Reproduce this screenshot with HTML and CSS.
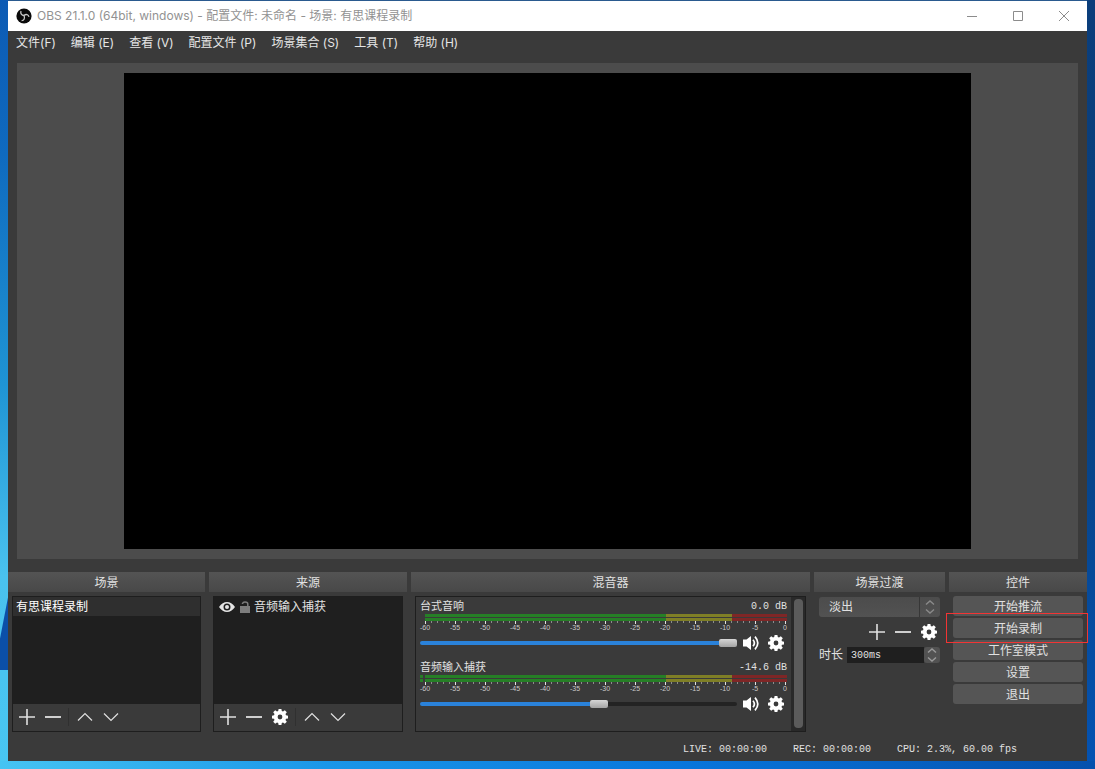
FILE: index.html
```html
<!DOCTYPE html>
<html lang="zh-CN">
<head>
<meta charset="utf-8">
<title>OBS 21.1.0</title>
<link rel="stylesheet" href="styles.css">
</head>
<body>
<svg class="defs" aria-hidden="true">
  <symbol id="plus" viewBox="0 0 16 16"><path d="M8 0v16M0 8h16" fill="none" stroke="currentColor" stroke-width="1.6"/></symbol>
  <symbol id="minus" viewBox="0 0 16 16"><path d="M0 8h16" fill="none" stroke="currentColor" stroke-width="1.8"/></symbol>
  <symbol id="up" viewBox="0 0 16 16"><path d="M1 11.5 8 4.5l7 7" fill="none" stroke="currentColor" stroke-width="1.2"/></symbol>
  <symbol id="down" viewBox="0 0 16 16"><path d="M1 4.5l7 7 7-7" fill="none" stroke="currentColor" stroke-width="1.2"/></symbol>
  <symbol id="gear" viewBox="0 0 16 16"><path fill="currentColor" fill-rule="evenodd" d="M6.6 0h2.8l.4 2.1 1.2.5L12.8 1.3l2 2-1.3 1.8.5 1.2 2 .4v2.7l-2 .4-.5 1.2 1.3 1.8-2 2-1.8-1.3-1.2.5-.4 2H6.6l-.4-2-1.2-.5-1.8 1.3-2-2L2.500 11 2 9.800 0 9.400V6.700l2-.4.5-1.200L1.200 3.300l2-2L5 2.600l1.200-.5zM8 5.600a2.400 2.400 0 1 0 0 4.800 2.400 2.400 0 0 0 0-4.800z"/></symbol>
  <symbol id="speaker" viewBox="0 0 16 16"><path fill="currentColor" d="M0 4.500h3.500L8 1v14l-4.500-3.500H0z"/><path d="M10 4.800q2.800 3.200 0 6.400M12 1.600q5.600 6.400 0 12.800" fill="none" stroke="currentColor" stroke-width="1.700"/></symbol>
  <symbol id="spin" viewBox="0 0 16 16"><path d="M4 5.500 8 2l4 3.500M4 10.500 8 14l4-3.500" fill="none" stroke="currentColor" stroke-width="1.400"/></symbol>
  <pattern id="minor" x="5" width="6" height="2" patternUnits="userSpaceOnUse"><path fill="#8c8c8c" d="M0 0h1v2H0z"/></pattern>
  <pattern id="major" x="5" width="30" height="3" patternUnits="userSpaceOnUse"><path fill="#e0e0e0" d="M0 0h1v3H0z"/></pattern>
  <symbol id="scale" viewBox="0 0 367 10">
    <path fill="#267f26" d="M5 0h241v3H5zM5 4h241v3H5z"/>
    <path fill="#7f7f26" d="M246 0h66v3h-66zM246 4h66v3h-66z"/>
    <path fill="#7f2626" d="M312 0h55v3h-55zM312 4h55v3h-55z"/>
    <g transform="translate(0 7)"><rect x="5" width="361" height="2" fill="url(#minor)"/><rect x="5" width="361" height="3" fill="url(#major)"/></g>
  </symbol>
</svg>
<div class="window">
  <header class="titlebar">
    <svg class="logo" viewBox="0 0 16 16" aria-hidden="true"><circle cx="8" cy="8" r="7.600" fill="#0a0a0a"/><g fill="none" stroke="#c8c8c8" stroke-width="1.300"><path d="M5 3c-.8 2.600.6 4.300 3 4.500"/><path d="M13 8.800c-.6-2.400-3-3-5-1.300"/><path d="M5.600 12.600c2.600 0 3.600-2.600 2.400-5.100"/></g></svg>
    <h1>OBS 21.1.0 (64bit, windows) - 配置文件: 未命名 - 场景: 有思课程录制</h1>
    <div class="caption">
      <button aria-label="最小化"><svg viewBox="0 0 10 10"><path d="M0 5.500h10"/></svg></button>
      <button aria-label="最大化"><svg viewBox="0 0 10 10"><path d="M.5.500h9v9h-9z"/></svg></button>
      <button aria-label="关闭"><svg viewBox="0 0 10 10"><path d="M0 0l10 10M10 0 0 10"/></svg></button>
    </div>
  </header>
  <nav class="menu">
    <a href="#">文件(F)</a><a href="#">编辑 (E)</a><a href="#">查看 (V)</a><a href="#">配置文件 (P)</a><a href="#">场景集合 (S)</a><a href="#">工具 (T)</a><a href="#">帮助 (H)</a>
  </nav>
  <main class="preview"><div class="canvas"></div></main>
  <div class="docks">
    <section class="dock">
      <h2>场景</h2>
      <div class="panel inset">
        <ul class="list"><li class="selected">有思课程录制</li></ul>
        <div class="tools">
          <button aria-label="添加场景"><svg><use href="#plus"/></svg></button>
          <button aria-label="删除场景"><svg><use href="#minus"/></svg></button>
          <span class="sep"></span>
          <button aria-label="上移"><svg><use href="#up"/></svg></button>
          <button aria-label="下移"><svg><use href="#down"/></svg></button>
        </div>
      </div>
    </section>
    <section class="dock">
      <h2>来源</h2>
      <div class="panel inset">
        <ul class="list"><li class="source">
          <svg class="eye" viewBox="0 0 16 12"><path fill="#e4e4e4" fill-rule="evenodd" d="M0 6q3.500-5 8-5t8 5q-3.500 5-8 5T0 6zm8-3.500a3.500 3.500 0 1 0 0 7 3.500 3.500 0 0 0 0-7z"/><circle cx="8" cy="6" r="2" fill="#e4e4e4"/></svg>
          <svg class="lock" viewBox="0 0 11 12"><path fill="#7d7d7d" d="M1 5h10v7H1z"/><path d="M3.500 3V2.500Q4 1 6 1q2.800 0 2.800 2v2" fill="none" stroke="#7d7d7d" stroke-width="1.500"/></svg>
          <span>音频输入捕获</span></li></ul>
        <div class="tools">
          <button aria-label="添加来源"><svg><use href="#plus"/></svg></button>
          <button aria-label="删除来源"><svg><use href="#minus"/></svg></button>
          <button class="bright" aria-label="来源设置"><svg><use href="#gear"/></svg></button>
          <span class="sep"></span>
          <button aria-label="上移"><svg><use href="#up"/></svg></button>
          <button aria-label="下移"><svg><use href="#down"/></svg></button>
        </div>
      </div>
    </section>
    <section class="dock">
      <h2>混音器</h2>
      <div class="mixer inset">
        <div class="channels">
          <div class="channel">
            <div class="name"><label for="desk">台式音响</label><output>0.0 dB</output></div>
            <svg class="meter" viewBox="0 0 367 10"><use href="#scale"/></svg>
            <div class="marks"><span>-60</span><span>-55</span><span>-50</span><span>-45</span><span>-40</span><span>-35</span><span>-30</span><span>-25</span><span>-20</span><span>-15</span><span>-10</span><span>-5</span><span>0</span></div>
            <div class="volume">
              <input id="desk" type="range" min="0" max="100" value="100" style="--level:100%">
              <button aria-label="静音"><svg><use href="#speaker"/></svg></button>
              <button aria-label="音频设置"><svg><use href="#gear"/></svg></button>
            </div>
          </div>
          <div class="channel">
            <div class="name"><label for="mic">音频输入捕获</label><output>-14.6 dB</output></div>
            <svg class="meter" viewBox="0 0 367 10"><path fill="#267f26" d="M0 0h3v3H0zM0 4h3v3H0z"/><use href="#scale"/></svg>
            <div class="marks"><span>-60</span><span>-55</span><span>-50</span><span>-45</span><span>-40</span><span>-35</span><span>-30</span><span>-25</span><span>-20</span><span>-15</span><span>-10</span><span>-5</span><span>0</span></div>
            <div class="volume">
              <input id="mic" type="range" min="0" max="100" value="57" style="--level:57%">
              <button aria-label="静音"><svg><use href="#speaker"/></svg></button>
              <button aria-label="音频设置"><svg><use href="#gear"/></svg></button>
            </div>
          </div>
        </div>
        <div class="scroll"><div class="handle"></div></div>
      </div>
    </section>
    <section class="dock">
      <h2>场景过渡</h2>
      <div class="transition">
        <div class="combo">
          <select aria-label="场景过渡"><option>淡出</option></select>
          <svg><use href="#spin"/></svg>
        </div>
        <div class="actions">
          <button aria-label="添加过渡"><svg><use href="#plus"/></svg></button>
          <button aria-label="删除过渡"><svg><use href="#minus"/></svg></button>
          <button class="bright" aria-label="过渡设置"><svg><use href="#gear"/></svg></button>
        </div>
        <div class="duration">
          <label for="duration">时长</label>
          <input id="duration" type="text" value="300ms">
          <button aria-label="调整时长"><svg><use href="#spin"/></svg></button>
        </div>
      </div>
    </section>
    <section class="dock">
      <h2>控件</h2>
      <div class="controls">
        <button>开始推流</button>
        <div class="marked"><button>开始录制</button></div>
        <button>工作室模式</button>
        <button>设置</button>
        <button>退出</button>
      </div>
    </section>
  </div>
  <footer class="status"><span>LIVE: 00:00:00</span><span>REC: 00:00:00</span><span>CPU: 2.3%, 60.00 fps</span></footer>
</div>
</body>
</html>
```
FILE: styles.css
```css
* { box-sizing: border-box; }

body {
  display: flex;
  min-height: 100vh;
  margin: 0;
  padding: 1px 8px 8px;
  font: 12px/20px "Liberation Sans", "Noto Sans CJK SC", sans-serif;
  color: #e1e1e1;
  background:
    linear-gradient(90deg, #45c4f3, #1a96e8 30%, #0876dc 62%, #0450ad) bottom / 100% 8px no-repeat,
    linear-gradient(101deg, transparent 8px, #0b4fa8 9px) 0 594px / 8px 76px no-repeat,
    linear-gradient(#0c5ab4, #0f6abf 20%, #1f94d4 50%, #4ac2ee 75%, #48c6f2) left / 8px 100% no-repeat,
    linear-gradient(#0b3e7b, #08407f 50%, #0453b3) right / 8px 100% no-repeat,
    #2a5a8f;
}

.defs { position: absolute; width: 0; height: 0; }

h1, h2, ul { margin: 0; padding: 0; font: inherit; list-style: none; }

button {
  display: flex;
  align-items: center;
  justify-content: center;
  padding: 0;
  border: 0;
  background: none;
  font: inherit;
  color: inherit;
}

button svg { width: 16px; height: 16px; }

.window {
  flex: 1;
  display: flex;
  flex-direction: column;
  min-width: 0;
  background: #3a3a3a;
}

.titlebar {
  display: flex;
  align-items: center;
  height: 30px;
  padding-left: 8px;
  background: #fff;
  color: #929292;
  font-family: Inter, "Noto Sans CJK SC", sans-serif;
}
.logo { width: 16px; height: 16px; margin-right: 5px; }
.caption { display: flex; margin-left: auto; }
.caption button { width: 46px; height: 30px; }
.caption svg { width: 10px; height: 10px; fill: none; stroke: #8c8c8c; }

.menu {
  display: flex;
  gap: 15px;
  padding: 2px 8px 10px;
  font-family: Inter, "Noto Sans CJK SC", sans-serif;
}
.menu a { color: #e6e6e6; text-decoration: none; white-space: nowrap; }

.preview {
  flex: 1;
  display: flex;
  justify-content: center;
  min-height: 120px;
  margin: 0 9px;
  padding: 10px;
  background: #4c4c4c;
}
.canvas { aspect-ratio: 16 / 9; background: #000; }

.docks {
  display: grid;
  grid-template-columns: 197fr 198fr 399fr 131fr 138fr;
  gap: 4px;
  margin-top: 13px;
}
.dock { min-width: 0; }
.dock h2 {
  height: 20px;
  background: linear-gradient(#545454, #484848);
  line-height: 22px;
  text-align: center;
}

.inset {
  height: 136px;
  margin: 4px 4px 0;
  border: 1px solid #1e1e1e;
}

.panel { display: flex; flex-direction: column; }
.list { flex: 1; background: #1f1f1f; }
.list li { height: 19px; padding: 0 3px; line-height: 21px; }
.selected { background: #2f2f2f; color: #fff; }
.list .source { display: flex; padding-left: 5px; }
.source svg { height: 12px; margin: 4px 4px 0 0; }
.eye { width: 16px; }
.lock { width: 11px; }

.tools { display: flex; height: 27px; padding-left: 1px; }
.tools button, .actions button { width: 26px; height: 26px; }
.tools svg, .actions svg { color: #e0e0e0; }
.tools .bright svg, .actions .bright svg { color: #fff; }
.sep { width: 1px; height: 18px; margin: 4px 3px 0 2px; background: #303030; }

.mixer { display: flex; }
.channels { flex: 1; min-width: 0; padding: 0 4px; }
.channel { height: 61px; }
.name {
  display: flex;
  justify-content: space-between;
  height: 17px;
  font-size: 11px;
  line-height: 18px;
}
output { font: 10px/20px "Liberation Mono", monospace; }
.meter { display: block; width: 100%; }
.marks {
  display: flex;
  justify-content: space-between;
  padding: 0 2px 0 5px;
  color: #c8c8c8;
  font: 7px/8px "Liberation Sans", sans-serif;
}
.marks span { display: flex; justify-content: center; width: 0; }

.volume { display: flex; align-items: center; height: 22px; color: #fff; }
.volume button { width: 16px; margin-right: 9px; }
.volume button:last-child { margin-right: 3px; }
.volume input {
  flex: 1;
  min-width: 0;
  height: 10px;
  margin: 0 6px 0 0;
  appearance: none;
  background: none;
}
.volume input::-webkit-slider-runnable-track {
  height: 4px;
  border-radius: 2px;
  background: linear-gradient(90deg, #2a82da var(--level), #232323 var(--level));
}
.volume input::-webkit-slider-thumb {
  appearance: none;
  width: 18px;
  height: 8px;
  margin-top: -2px;
  border-radius: 2px;
  background: linear-gradient(#d6d6d6, #a4a4a4);
}

.scroll { width: 14px; padding: 2px 2px 3px 3px; background: #292929; }
.handle { height: 100%; border-radius: 4px; background: #5b5b5b; }

.transition { padding: 5px 5px 0; }
.combo {
  display: grid;
  grid-template-columns: 1fr 20px;
  height: 20px;
  border-radius: 3px;
  background: linear-gradient(#4c4c4c, #525252);
}
.combo select {
  min-width: 0;
  padding: 0 10px;
  appearance: none;
  border: 0;
  border-right: 1px solid #373737;
  background: none;
  color: inherit;
  font: inherit;
}
.combo svg { width: 16px; height: 16px; margin: 2px; color: #8a8a8a; }
.actions { display: flex; justify-content: flex-end; margin: 2px -2px 0 0; }
.duration { display: flex; align-items: center; height: 20px; line-height: 22px; }
.duration input {
  flex: 1;
  min-width: 0;
  height: 16px;
  margin-left: 4px;
  padding: 0 4px;
  border: 0;
  background: #1f1f1f;
  color: #e1e1e1;
  font: 10px "Liberation Mono", monospace;
}
.duration button {
  width: 16px;
  height: 16px;
  border-radius: 3px;
  background: #525252;
  color: #9a9a9a;
}

.controls { display: flex; flex-direction: column; gap: 2px; padding: 4px 4px 0; }
.controls button { width: 100%; height: 20px; padding-top: 2px; border-radius: 3px; background: #555; }
.marked { position: relative; }
.marked::after {
  content: "";
  position: absolute;
  inset: -5px -5px -5px -7px;
  z-index: 1;
  border: 1px solid #f23434;
  pointer-events: none;
}

.status {
  display: flex;
  justify-content: flex-end;
  gap: 26px;
  padding: 8px 70px 1px 0;
  font: 10px/20px "Liberation Mono", monospace;
  white-space: pre;
}
```
